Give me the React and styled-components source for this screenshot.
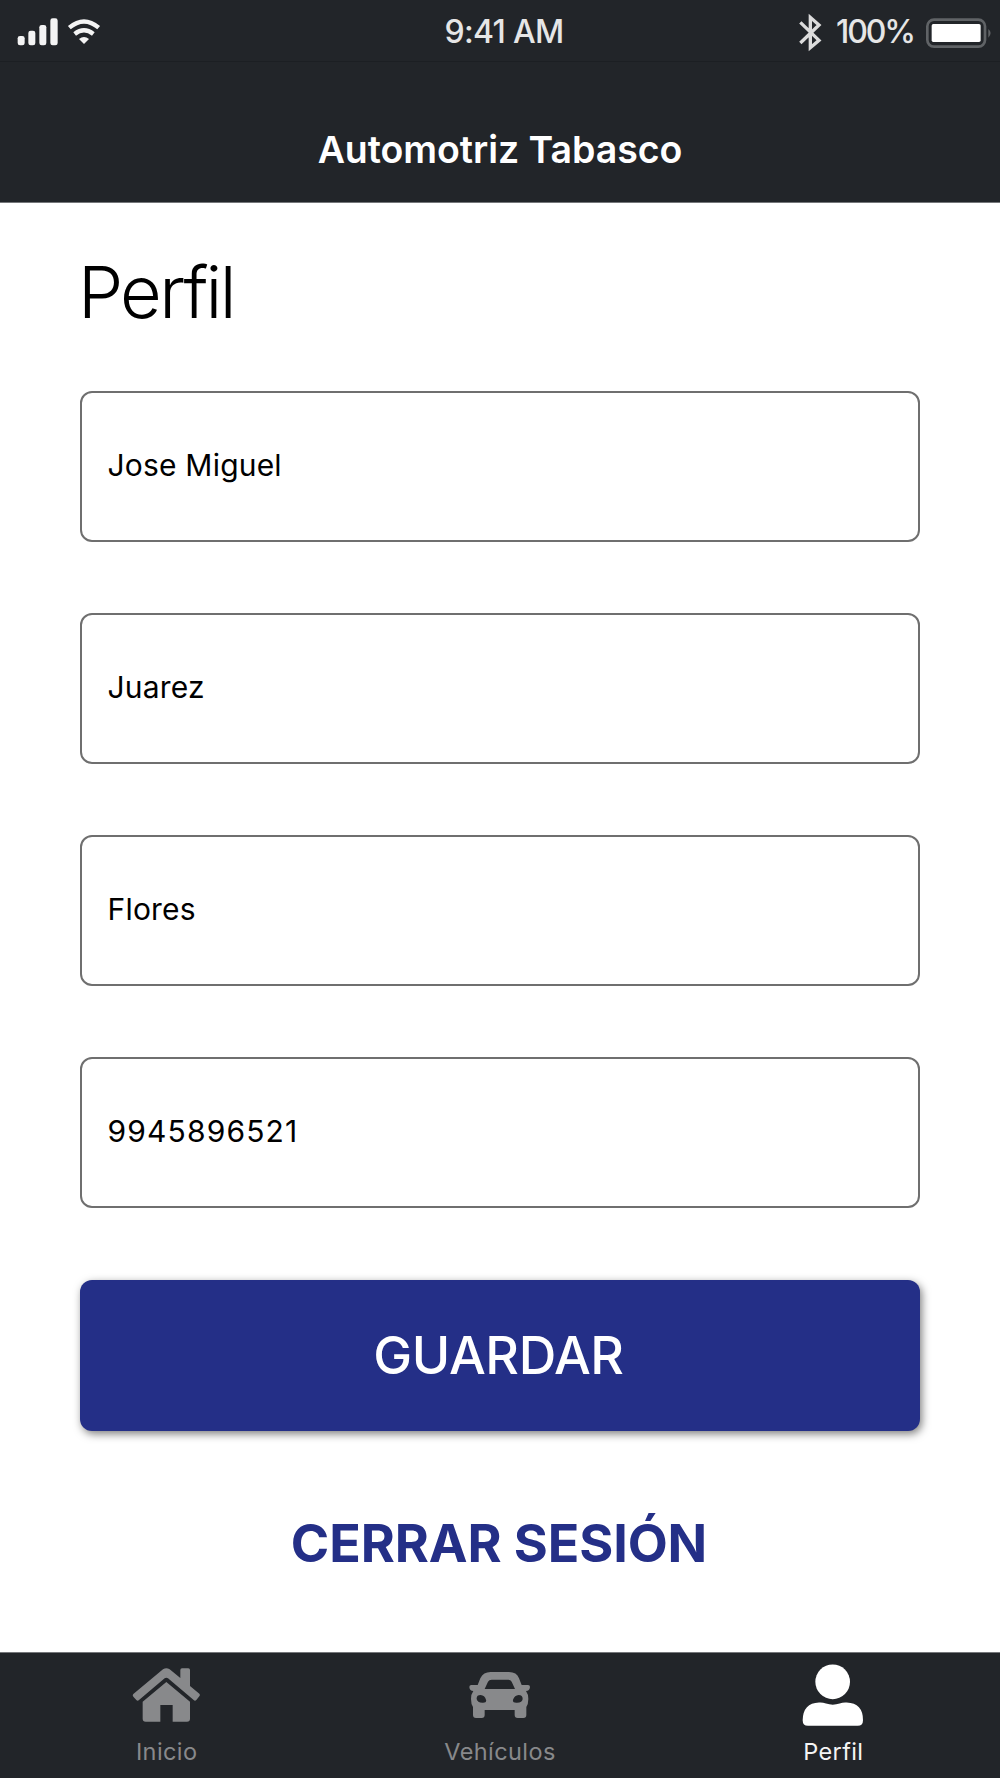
import React, { useState } from 'react';
import styled, { createGlobalStyle } from 'styled-components';

const GlobalStyle = createGlobalStyle`
  * {
    box-sizing: border-box;
  }
  body {
    margin: 0;
    background: #fff;
    font-family: Inter, Roboto, sans-serif;
  }
`;

const Screen = styled.div`
  width: 1000px;
  height: 1778px;
  display: flex;
  flex-direction: column;
  background: #fff;
  overflow: hidden;
`;

const StatusBar = styled.div`
  height: 62px;
  flex: none;
  display: grid;
  grid-template-columns: 1fr auto 1fr;
  align-items: center;
  background: #222529;
  border-bottom: 1px solid #1c1f23;
  color: #e6e6e6;
  font-size: 32px;
  line-height: 60px;
`;

const StatusGroup = styled.div`
  display: flex;
  align-items: center;
  justify-content: ${(props) => (props.$end ? 'flex-end' : 'flex-start')};
`;

const Clock = styled.span`
  padding: 2px 0 0 8px;
  font-weight: 500;
  letter-spacing: -0.7px;
`;

const Battery = styled.span`
  margin: 0 11px 0 14px;
  padding-top: 2px;
  font-weight: 500;
  letter-spacing: -2.1px;
`;

const Header = styled.header`
  height: 141px;
  flex: none;
  padding-top: 64px;
  background: #222529;
  border-bottom: 1px solid #75777a;
  color: #fff;
  text-align: center;
`;

const HeaderTitle = styled.div`
  font-size: 37.5px;
  font-weight: 600;
  line-height: 48px;
  letter-spacing: -0.05px;
`;

const Content = styled.main`
  flex: 1;
  padding: 0 80px;
  display: flex;
  flex-direction: column;
`;

const Title = styled.h1`
  margin: 44px 0 54px -2px;
  font-size: 72px;
  font-weight: 300;
  line-height: 90px;
  letter-spacing: -2.7px;
`;

const Form = styled.form`
  display: flex;
  flex-direction: column;
  gap: 71.15px;
`;

const Field = styled.input`
  width: 100%;
  height: 151px;
  padding: 0 25.5px 3px;
  border: 2px solid #6f6f6f;
  border-radius: 12px;
  outline: none;
  background: #fff;
  color: #000;
  font-family: inherit;
  font-size: 30px;
  letter-spacing: ${(props) => (props.$numeric ? '1.15px' : '0.2px')};
`;

const SaveButton = styled.button`
  width: 100%;
  height: 151px;
  margin-top: 0.4px;
  padding: 0 3px 0 0;
  border: none;
  border-radius: 12px;
  background: #242f87;
  box-shadow: 2px 3px 8px rgba(0, 0, 0, 0.5);
  color: #fff;
  font-family: inherit;
  font-size: 52px;
  font-weight: 500;
  letter-spacing: -0.4px;
`;

const LogoutButton = styled.button`
  margin-top: 81px;
  padding: 0 2px 0 0;
  border: none;
  background: none;
  color: #242f87;
  font-family: inherit;
  font-size: 52px;
  font-weight: 700;
  line-height: 64px;
  letter-spacing: -0.1px;
`;

const TabBar = styled.nav`
  height: 126px;
  flex: none;
  display: grid;
  grid-template-columns: repeat(3, 1fr);
  background: #222529;
  border-top: 1px solid #75777a;
`;

const Tab = styled.div`
  display: flex;
  flex-direction: column;
  align-items: center;
  color: ${(props) => (props.$active ? '#fff' : '#88898b')};
`;

const TabLabel = styled.span`
  margin-top: -6px;
  font-size: 23.5px;
  line-height: 30px;
  letter-spacing: 0.4px;
  color: ${(props) => (props.$active ? '#f4f4f4' : '#88898b')};
`;

const SignalIcon = () => (
  <svg width="110" height="62" viewBox="0 0 330 186" fill="#f4f4f4">
    <rect x="53" y="108" width="21" height="28" rx="7" />
    <rect x="85" y="92" width="21" height="44" rx="7" />
    <rect x="118" y="75" width="21" height="61" rx="7" />
    <rect x="151" y="55" width="22" height="81" rx="7" />
    <g fill="none" stroke="#f4f4f4" strokeWidth="13">
      <path d="M208 83 Q252 46 296 83" />
      <path d="M224 102 Q252 80 280 102" />
    </g>
    <path d="M237 117 Q252 105 267 117 L252 132Z" />
  </svg>
);

const BluetoothIcon = () => (
  <svg width="26" height="62" viewBox="48 0 78 186" fill="none" stroke="#dcdcdc" strokeWidth="10">
    <path d="M61 67 L117 121 L91 143 V52 L117 75 L61 129" />
  </svg>
);

const BatteryIcon = () => (
  <svg width="75" height="62" viewBox="435 0 225 186">
    <rect x="442" y="59" width="173" height="81" rx="20" fill="none" stroke="#606366" strokeWidth="8" />
    <rect x="455" y="72" width="147" height="54" rx="5" fill="#fff" />
    <path d="M625 87 Q639 99 625 113Z" fill="#606366" />
  </svg>
);

const HomeIcon = () => (
  <svg width="130" height="90" viewBox="5 39 390 270" fill="currentColor">
    <path d="M99 162 L188 88 Q198 81 208 88 L240 114 V90 Q240 85 245 85 H264 Q269 85 269 90 V138 L297 161 Q301 165 297 169 L288 180 Q284 184 280 180 L203 115 Q198 111 193 115 L116 180 Q112 184 108 180 L99 170 Q95 166 99 162Z" />
    <path d="M198 126 L269 185 V236 Q269 245 260 245 H217 V195 H180 V245 H136 Q127 245 127 236 V185Z" />
  </svg>
);

const CarIcon = () => (
  <svg width="140" height="90" viewBox="0 39 420 270" fill="currentColor" fillRule="evenodd">
    <path d="M182 96 H237 Q260 96 267 115 L275 135 H294 Q300 135 300 141 Q299 153 288 153 Q295 162 295 177 Q295 192 289 201 V225 Q289 234 280 234 H263 Q254 234 254 225 V210 H164 V225 Q164 234 155 234 H138 Q129 234 129 225 V201 Q123 192 123 177 Q123 162 130 153 Q119 153 118 141 Q118 135 124 135 H143 L151 115 Q160 96 182 96Z M185 119 Q177 119 174 125 L164 147 H255 L245 125 Q242 119 235 119Z M152 165 Q139 165 140 177 Q142 188 157 188 Q171 189 168 179 Q164 166 152 165Z M266 165 Q254 166 249 179 Q247 189 261 188 Q277 188 278 177 Q278 165 266 165Z" />
  </svg>
);

const PersonIcon = () => (
  <svg width="130" height="90" viewBox="-6 37.5 390 270" fill="currentColor">
    <circle cx="188" cy="124" r="52" />
    <path d="M147 186 Q157 185 168 189 Q188 196 209 189 Q219 185 230 186 Q279 188 279 239 Q279 256 263 256 H114 Q98 256 98 239 Q99 188 147 186Z" />
  </svg>
);

const tabs = [
  { label: 'Inicio', icon: <HomeIcon /> },
  { label: 'Vehículos', icon: <CarIcon /> },
  { label: 'Perfil', icon: <PersonIcon />, active: true },
];

const App = () => {
  const [profile, setProfile] = useState({
    nombre: 'Jose Miguel',
    paterno: 'Juarez',
    materno: 'Flores',
    telefono: '9945896521',
  });

  const handleChange = (e) => {
    setProfile({ ...profile, [e.target.name]: e.target.value });
  };

  return (
    <>
      <GlobalStyle />
      <Screen>
        <StatusBar>
          <StatusGroup>
            <SignalIcon />
          </StatusGroup>
          <Clock>9:41 AM</Clock>
          <StatusGroup $end>
            <BluetoothIcon />
            <Battery>100%</Battery>
            <BatteryIcon />
          </StatusGroup>
        </StatusBar>
        <Header>
          <HeaderTitle>Automotriz Tabasco</HeaderTitle>
        </Header>
        <Content>
          <Title>Perfil</Title>
          <Form onSubmit={(e) => e.preventDefault()}>
            {Object.keys(profile).map((key) => (
              <Field
                key={key}
                name={key}
                value={profile[key]}
                onChange={handleChange}
                $numeric={key === 'telefono'}
              />
            ))}
            <SaveButton type="submit">GUARDAR</SaveButton>
          </Form>
          <LogoutButton>CERRAR SESIÓN</LogoutButton>
        </Content>
        <TabBar>
          {tabs.map((tab) => (
            <Tab key={tab.label} $active={tab.active}>
              {tab.icon}
              <TabLabel $active={tab.active}>{tab.label}</TabLabel>
            </Tab>
          ))}
        </TabBar>
      </Screen>
    </>
  );
};

export default App;
